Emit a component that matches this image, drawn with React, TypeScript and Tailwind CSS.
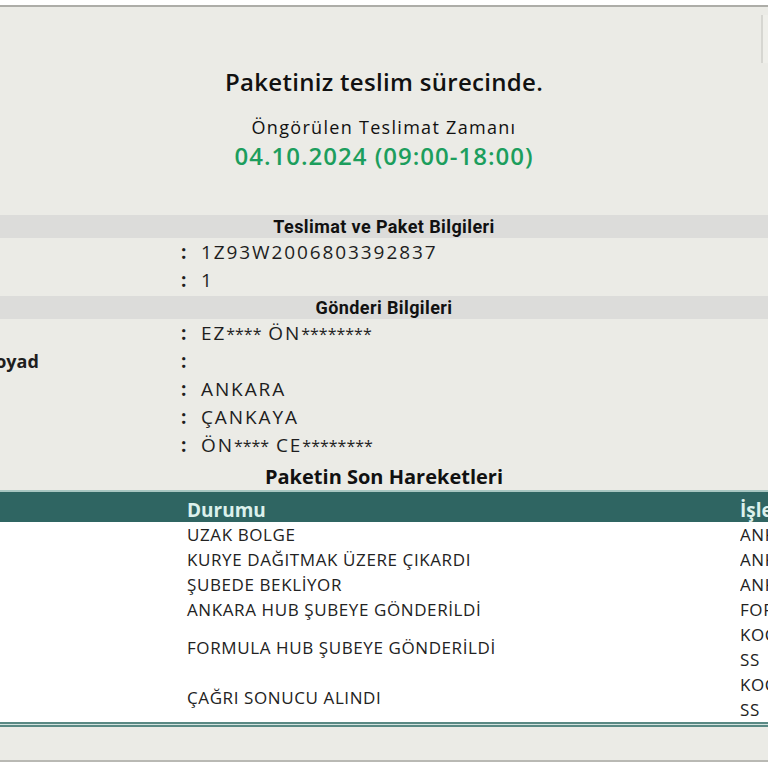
const infoRows = [
  { label: 'Takip No', value: '1Z93W2006803392837' },
  { label: 'Parça', value: '1' },
]

const senderRows = [
  { label: 'Gönderici', value: 'EZ**** ÖN********' },
  { label: 'Alıcı Ad Soyad', value: '', bold: true },
  { label: 'İl', value: 'ANKARA' },
  { label: 'İlçe', value: 'ÇANKAYA' },
  { label: 'Alıcı', value: 'ÖN**** CE********' },
]

const movements = [
  { status: 'UZAK BOLGE', place: ['ANKARA'] },
  { status: 'KURYE DAĞITMAK ÜZERE ÇIKARDI', place: ['ANKARA'] },
  { status: 'ŞUBEDE BEKLİYOR', place: ['ANKARA'] },
  { status: 'ANKARA HUB ŞUBEYE GÖNDERİLDİ', place: ['FORMULA'] },
  { status: 'FORMULA HUB ŞUBEYE GÖNDERİLDİ', place: ['KOCAELİ', 'SS'] },
  { status: 'ÇAĞRI SONUCU ALINDI', place: ['KOCAELİ', 'SS'] },
]

// masked names: asterisks are drawn a bit smaller than the letters
const Masked = ({ text }: { text: string }) => (
  <>
    {text.split(/(\*+)/).map((part, i) =>
      part.startsWith('*') ? (
        <span key={i} className="text-[16px] tracking-normal">
          {part}
        </span>
      ) : (
        <span key={i}>{part}</span>
      ),
    )}
  </>
)

const SectionBar = ({ title }: { title: string }) => (
  <div className="h-[23px] bg-[#dcdcda] flex items-center justify-center font-['Roboto',sans-serif] font-bold text-[18px] tracking-[0.4px] text-[#111]">
    {title}
  </div>
)

const InfoRow = ({ label, value, bold }: { label: string; value: string; bold?: boolean }) => (
  <div className="h-[28px] flex items-center text-[19px] text-[#1e1e1e] whitespace-nowrap">
    <div className="w-[181px] overflow-hidden">
      {bold ? <span className="block -ml-[86px] font-bold text-[18px]">{label}</span> : null}
    </div>
    <span className="w-[20px] font-bold">:</span>
    <span className="tracking-[1.9px]">
      <Masked text={value} />
    </span>
  </div>
)

export default function App() {
  return (
    <div className="w-[768px] h-[768px] overflow-hidden bg-white font-['Open_Sans',sans-serif] relative">
      <div className="mt-[5px] border-t-2 border-[#adada8] bg-[#ebebe6] h-[757px] flex flex-col border-b-2 border-b-[#b9b9b4]">
        <div className="pt-[60px] flex flex-col items-center whitespace-nowrap">
          <div className="text-[24px] leading-[30px] font-semibold tracking-[0.3px] text-[#111]">
            Paketiniz teslim sürecinde.
          </div>
          <div className="mt-[18px] text-[18px] leading-[24px] font-medium tracking-[1.3px] text-[#111]">
            Öngörülen Teslimat Zamanı
          </div>
          <div className="mt-[2px] text-[24px] leading-[30px] font-semibold tracking-[1px] text-[#1c9e5d]">
            04.10.2024 (09:00-18:00)
          </div>
        </div>

        <div className="mt-[44px]">
          <SectionBar title="Teslimat ve Paket Bilgileri" />
          {infoRows.map((r) => (
            <InfoRow key={r.label} label={r.label} value={r.value} />
          ))}
          <div className="mt-[2px]">
            <SectionBar title="Gönderi Bilgileri" />
          </div>
          {senderRows.map((r) => (
            <InfoRow key={r.label} label={r.label} value={r.value} bold={r.bold} />
          ))}
        </div>

        <div className="h-[31px] pt-[4px] flex items-center justify-center text-[20px] font-bold text-[#111]">
          Paketin Son Hareketleri
        </div>

        <div className="bg-white">
          <div className="border-t-2 border-[#a8c6c1] bg-[#2f6562] h-[32px] pt-[4px] grid grid-cols-[187px_553px_1fr] items-center text-[19px] font-bold text-[#dcf1ec] whitespace-nowrap">
            <div />
            <div>Durumu</div>
            <div>İşlem Yeri</div>
          </div>
          {movements.map((m) => (
            <div
              key={m.status}
              className="grid grid-cols-[187px_553px_1fr] items-center text-[17px] leading-[25px] tracking-[0.6px] text-[#222] whitespace-nowrap"
            >
              <div />
              <div>{m.status}</div>
              <div className="overflow-hidden">
                {m.place.map((p) => (
                  <div key={p}>{p}</div>
                ))}
              </div>
            </div>
          ))}
          <div className="h-[5px] border-y-2 border-[#5a8984] bg-[#d3e3df]" />
        </div>
      </div>
      <div className="absolute right-0 top-[15px] w-[7px] h-[48px] border-l-2 border-[#d6d6d1] bg-[#efefea]" />
    </div>
  )
}
